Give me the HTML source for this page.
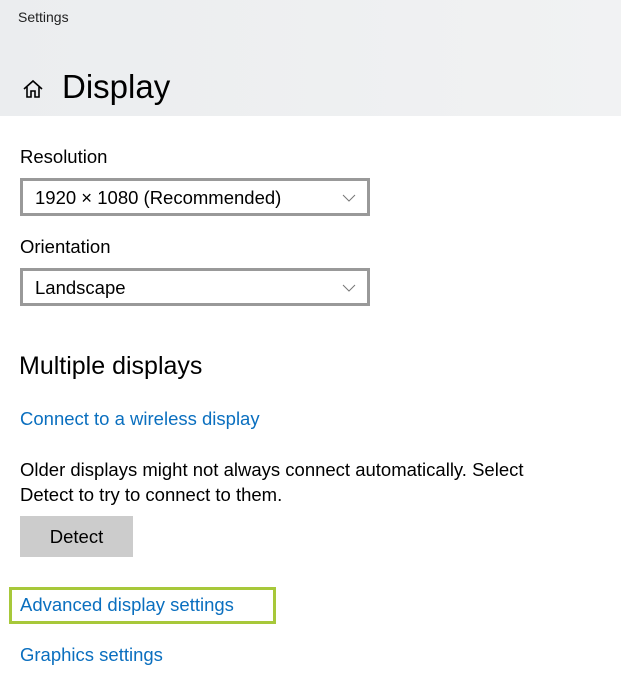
<!DOCTYPE html>
<html><head><style>
*{margin:0;padding:0;box-sizing:border-box}
body{width:621px;height:682px;background:#fff;font-family:"Liberation Sans",sans-serif;color:#000;position:relative;overflow:hidden}
.hdr{position:absolute;left:0;top:0;width:621px;height:116px;background:linear-gradient(90deg,#ebedef,#f1f2f3)}
.a{position:absolute;white-space:nowrap}
.box{position:absolute;left:20px;width:350px;height:38px;border:3px solid #999;background:#fff}
.box span{position:absolute;left:12px;top:6px;font-size:18.5px}
.box svg{position:absolute;right:11px;top:13px}
.lnk{color:#0a6fbf;font-size:18.5px}
</style></head><body>
<div class="hdr"></div>
<div class="a" style="left:18px;top:9px;font-size:14px;color:#222">Settings</div>
<svg class="a" style="left:22px;top:78px" width="22" height="22" viewBox="0 0 22 22" fill="none" stroke="#000" stroke-width="1.6"><path d="M2 11 L11 3 L20 11"/><path d="M5 9 V19 H9 V13 H13 V19 H17 V9"/></svg>
<div class="a" style="left:62px;top:68px;font-size:33px">Display</div>
<div class="a" style="left:20px;top:146px;font-size:18.5px">Resolution</div>
<div class="box" style="top:178px"><span>1920 × 1080 (Recommended)</span><svg width="14" height="8" viewBox="0 0 14 8"><path d="M1 1 L7 7 L13 1" fill="none" stroke="#777" stroke-width="1"/></svg></div>
<div class="a" style="left:20px;top:236px;font-size:18.5px">Orientation</div>
<div class="box" style="top:268px"><span>Landscape</span><svg width="14" height="8" viewBox="0 0 14 8"><path d="M1 1 L7 7 L13 1" fill="none" stroke="#777" stroke-width="1"/></svg></div>
<div class="a" style="left:19px;top:352px;font-size:25px">Multiple displays</div>
<div class="a lnk" style="left:20px;top:408px">Connect to a wireless display</div>
<div class="a" style="left:20px;top:457px;font-size:18.5px;line-height:25px">Older displays might not always connect automatically. Select<br>Detect to try to connect to them.</div>
<div class="a" style="left:20px;top:516px;width:113px;height:41px;background:#ccc;font-size:18.5px;text-align:center;line-height:41px">Detect</div>
<div class="a" style="left:9px;top:587px;width:267px;height:37px;border:3px solid #a7c83a"></div>
<div class="a lnk" style="left:20px;top:594px">Advanced display settings</div>
<div class="a lnk" style="left:20px;top:644px">Graphics settings</div>
</body></html>
